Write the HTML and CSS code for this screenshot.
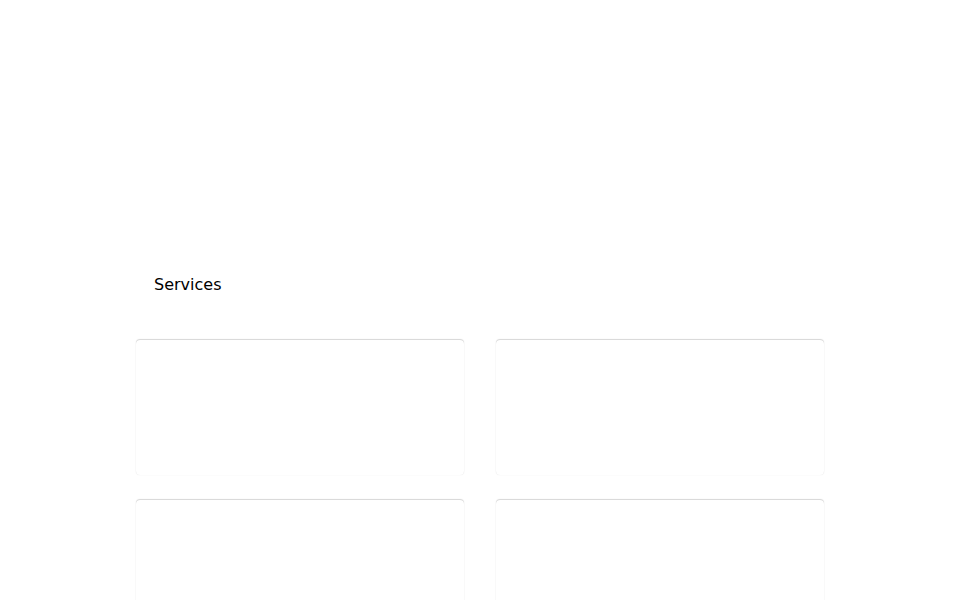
FILE: index.html
```html
<!DOCTYPE html>
<html lang="en">
<head>
<meta charset="utf-8">
<title>Services</title>
<link rel="stylesheet" href="styles.css">
</head>
<body>
<main class="page">
  <section class="services">
    <h2 class="services-title">Services</h2>
    <div class="service-grid">
      <div class="service-card"></div>
      <div class="service-card"></div>
      <div class="service-card"></div>
      <div class="service-card"></div>
    </div>
  </section>
</main>
</body>
</html>
```
FILE: styles.css
```css
html, body {
  margin: 0;
  padding: 0;
  background: #ffffff;
}
body {
  font-family: "DejaVu Sans", sans-serif;
  color: #000000;
  overflow: hidden;
  height: 600px;
}
.page {
  padding-top: 275px;
}
.services {
  width: 688px;
  margin: 0 auto;
}
.services-title {
  margin: 0 0 46px 18px;
  font-size: 16px;
  line-height: 19px;
  font-weight: normal;
}
.service-grid {
  display: grid;
  grid-template-columns: 1fr 1fr;
  column-gap: 32px;
  row-gap: 25px;
}
.service-card {
  height: 135px;
  background: #ffffff;
  border-radius: 4px;
  box-shadow: 0 -1px 1px rgba(0, 0, 0, 0.15), 0 0 1px rgba(0, 0, 0, 0.13);
}
```
